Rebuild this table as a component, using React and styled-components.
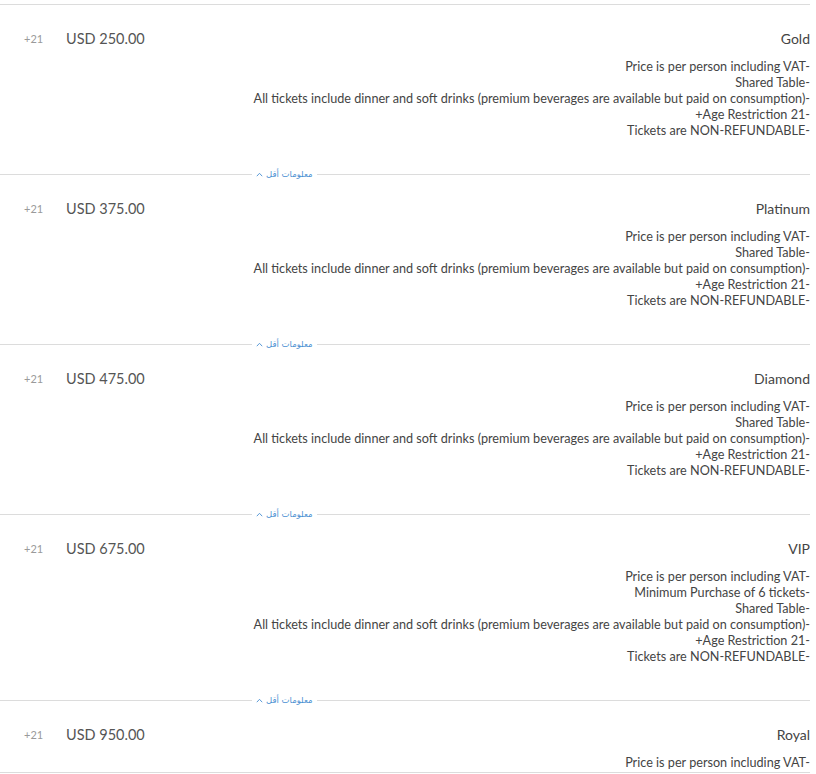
import React from 'react';
import styled, { createGlobalStyle } from 'styled-components';

const GlobalStyle = createGlobalStyle`
  html, body {
    margin: 0;
    padding: 0;
    background: #fff;
  }
  body {
    font-family: Lato, "Liberation Sans", "DejaVu Sans", sans-serif;
  }
`;

const common = [
  'Price is per person including VAT-',
];
const rest = [
  'Shared Table-',
  'All tickets include dinner and soft drinks (premium beverages are available but paid on consumption)-',
  '+Age Restriction 21-',
  'Tickets are NON-REFUNDABLE-',
];

const tickets = [
  { name: 'Gold', price: 'USD 250.00', lines: [...common, ...rest] },
  { name: 'Platinum', price: 'USD 375.00', lines: [...common, ...rest] },
  { name: 'Diamond', price: 'USD 475.00', lines: [...common, ...rest] },
  { name: 'VIP', price: 'USD 675.00', lines: [...common, 'Minimum Purchase of 6 tickets-', ...rest] },
  { name: 'Royal', price: 'USD 950.00', lines: [...common, ...rest] },
];

const ChevronUp = () => (
  <svg width="7" height="5" viewBox="0 0 7 5" fill="none">
    <path d="M0.8 4.2 L3.5 1.3 L6.2 4.2" stroke="currentColor" strokeWidth="0.9" />
  </svg>
);

const App = () => {
  return (
    <>
      <GlobalStyle />
      <Scroller>
        {tickets.map((t, i) => (
          <React.Fragment key={t.name}>
            {i > 0 && (
              <Divider>
                <Line $w="252px" />
                <Toggle>
                  <ChevronUp />
                  <span dir="rtl">معلومات أقل</span>
                </Toggle>
                <Line />
              </Divider>
            )}
            <Ticket>
              <Header>
                <Meta>
                  <Age>+21</Age>
                  <Price>{t.price}</Price>
                </Meta>
                <Name>{t.name}</Name>
              </Header>
              <Desc>
                {t.lines.map((l) => (
                  <DescLine key={l}>{l}</DescLine>
                ))}
              </Desc>
            </Ticket>
          </React.Fragment>
        ))}
      </Scroller>
    </>
  );
};

export default App;

const Scroller = styled.div`
  box-sizing: border-box;
  width: 810px;
  height: 769px;
  margin-top: 4px;
  padding-top: 3px;
  border-top: 1px solid #dcdcdc;
  border-bottom: 1px solid #dcdcdc;
  overflow: hidden;
`;

const Ticket = styled.div`
  padding: 20px 0 31px;
`;

const Header = styled.div`
  display: flex;
  justify-content: space-between;
  align-items: center;
  height: 20px;
`;

const Meta = styled.div`
  display: flex;
  align-items: center;
  padding-left: 24px;
`;

const Age = styled.span`
  width: 42px;
  font-size: 11px;
  color: #9a9a9a;
`;

const Price = styled.span`
  font-size: 14.5px;
  color: #555;
`;

const Name = styled.span`
  font-size: 14px;
  color: #444;
`;

const Desc = styled.div`
  margin-top: 11px;
  text-align: right;
`;

const DescLine = styled.div`
  font-size: 12.65px;
  line-height: 16px;
  color: #444;
  white-space: nowrap;
`;

const Divider = styled.div`
  display: flex;
  align-items: center;
  height: 8px;
`;

const Line = styled.div`
  height: 1px;
  background: #dcdcdc;
  ${(p) => (p.$w ? `width: ${p.$w};` : 'flex: 1;')}
`;

const Toggle = styled.button`
  display: flex;
  align-items: center;
  gap: 3px;
  height: 8px;
  padding: 0 4px;
  border: none;
  background: none;
  color: #4a90d2;
  font-family: "DejaVu Sans", sans-serif;
  font-size: 8.5px;
  cursor: pointer;
`;
